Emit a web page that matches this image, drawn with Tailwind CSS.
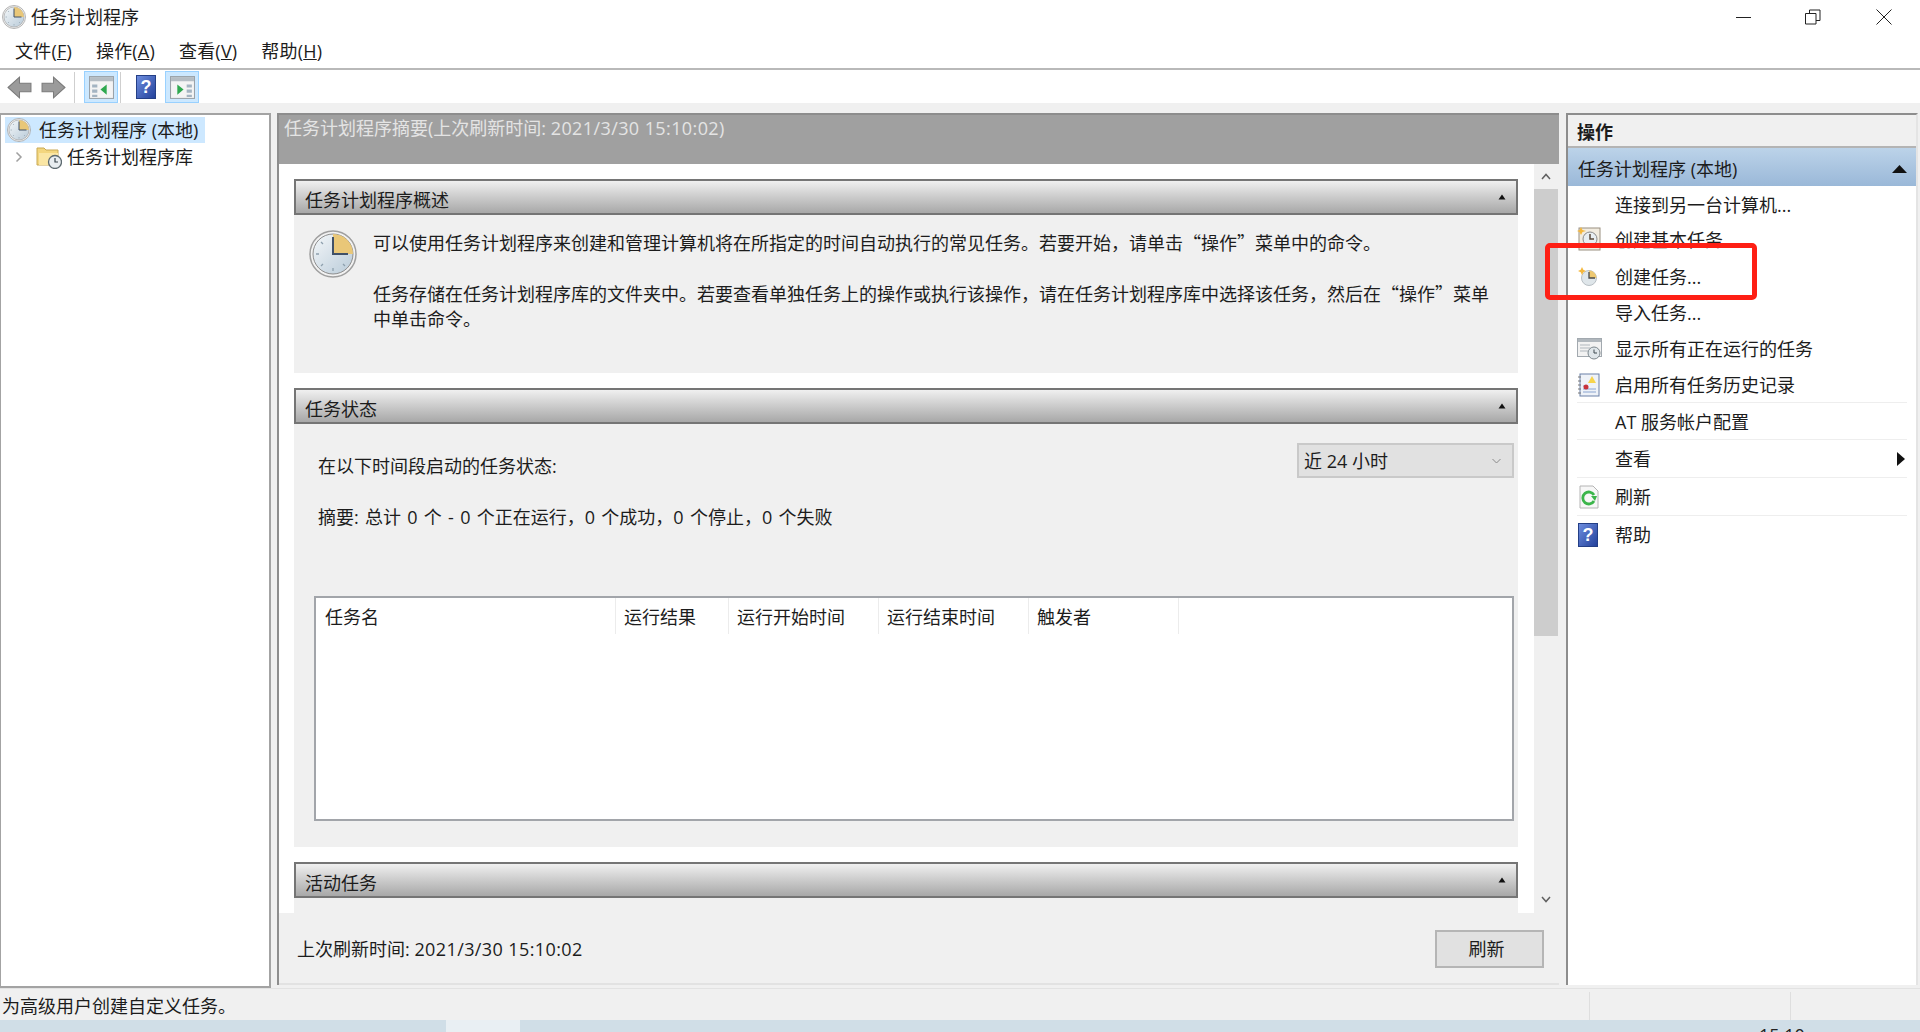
<!DOCTYPE html>
<html lang="zh-CN">
<head>
<meta charset="UTF-8">
<title>任务计划程序</title>
<script src="https://cdn.jsdelivr.net/npm/@tailwindcss/browser@4"></script>
</head>
<body class="bg-white text-[#1c1c1c] text-[18px] leading-[24px] font-['Open_Sans','Noto_Sans_CJK_SC',sans-serif]">
<!-- shared icons; not display:none or the gradients stop working -->
<svg class="absolute w-0 h-0">
  <defs>
    <linearGradient id="dial" x1="0" y1="0" x2="1" y2="1">
      <stop offset="0" stop-color="#f4f7f9"/>
      <stop offset="1" stop-color="#b9cbd9"/>
    </linearGradient>
    <linearGradient id="helpfill" x1="0" y1="0" x2="1" y2="1">
      <stop offset="0" stop-color="#6f8fe0"/>
      <stop offset="1" stop-color="#22409a"/>
    </linearGradient>
  </defs>
  <symbol id="clock" viewBox="0 0 48 48">
    <circle cx="24" cy="24" r="23" fill="#f2f2f2" stroke="#9f9f9f" stroke-width="1.5"/>
    <circle cx="24" cy="24" r="20" fill="url(#dial)" stroke="#8d8d8d"/>
    <path d="M24 24V4A20 20 0 0 1 44 24Z" fill="#e9c778"/>
    <path d="M24 41v-3M7 24h3M12 36l2-2M36 36l-2-2M12 12l2 2" stroke="#8ea0ae" stroke-width="1.300"/>
    <path d="M24 7v17h15" fill="none" stroke="#3f5068" stroke-width="2"/>
  </symbol>
  <symbol id="arrow" viewBox="0 0 24 24">
    <path d="M1 12 12 2v6h11v8H12v6Z" fill="#9b9b9b" stroke="#7b7b7b"/>
  </symbol>
  <symbol id="panel-left" viewBox="0 0 24 24">
    <rect x="0.5" y="1.5" width="23" height="21" fill="#f4f4f4" stroke="#9aa2a9"/>
    <rect x="1" y="2" width="22" height="4" fill="#b5bdc4"/>
    <path d="M3 9h5v3H3zM3 14h5v3H3zM3 19h5v2H3z" fill="#a4b4c2"/>
    <path d="M17 9v10l-6-5Z" fill="#2fa84f"/>
  </symbol>
  <symbol id="panel-right" viewBox="0 0 24 24">
    <rect x="0.5" y="1.5" width="23" height="21" fill="#f4f4f4" stroke="#9aa2a9"/>
    <rect x="1" y="2" width="22" height="4" fill="#b5bdc4"/>
    <path d="M16 9h5v3h-5zM16 14h5v3h-5zM16 19h5v2h-5z" fill="#a4b4c2"/>
    <path d="M7 9v10l6-5Z" fill="#2fa84f"/>
  </symbol>
  <symbol id="collapse" viewBox="0 0 8 6">
    <path d="M4 0.5 7.5 5.5H.5Z" fill="#111"/>
  </symbol>
</svg>

<div class="flex flex-col w-[1920px] h-[1032px] overflow-hidden">
  <!-- title bar -->
  <div class="h-[34px] flex items-center shrink-0">
    <svg class="w-[24px] h-[24px] ml-[2px]"><use href="#clock"/></svg>
    <span class="ml-[5px]">任务计划程序</span>
    <div class="ml-auto flex items-center">
      <svg class="w-[16px] h-[16px] mr-[53px]" viewBox="0 0 16 16"><path d="M0 8.5h15" stroke="#222" fill="none"/></svg>
      <svg class="w-[16px] h-[16px] mr-[55px]" viewBox="0 0 16 16"><path d="M.5 4.5h10.500v10.500H.5ZM4.500 4.500V1h10.500v10.500H11" stroke="#222" fill="none"/></svg>
      <svg class="w-[16px] h-[16px] mr-[28px]" viewBox="0 0 16 16"><path d="M.5.5l15 15M15.500.5l-15 15" stroke="#222" fill="none"/></svg>
    </div>
  </div>
  <!-- menu -->
  <div class="h-[36px] flex items-center pl-[15px] gap-[24px] tracking-[.2px] border-b-2 border-[#b9b9b9] shrink-0 pb-[1px]">
    <span>文件(<u>F</u>)</span>
    <span>操作(<u>A</u>)</span>
    <span>查看(<u>V</u>)</span>
    <span>帮助(<u>H</u>)</span>
  </div>
  <!-- toolbar -->
  <div class="h-[33px] pt-[1px] flex items-center shrink-0">
    <svg class="w-[25px] h-[25px] ml-[7px]"><use href="#arrow"/></svg>
    <svg class="w-[25px] h-[25px] ml-[9px] -scale-x-100"><use href="#arrow"/></svg>
    <div class="w-px h-[31px] bg-[#cfcfcf] ml-[8px]"></div>
    <div class="w-[34px] h-[32px] ml-[9px] flex items-center justify-center bg-[#cce8ff] border border-[#99d1ff]">
      <svg class="w-[25px] h-[25px]"><use href="#panel-left"/></svg>
    </div>
    <div class="w-px h-[31px] bg-[#cfcfcf] ml-[2px]"></div>
    <svg class="w-[20px] h-[24px] ml-[15px]" viewBox="0 0 20 24">
      <rect x="0.5" y="0.5" width="19" height="23" fill="url(#helpfill)" stroke="#243f86"/>
      <text x="10" y="18" text-anchor="middle" font-size="18" font-weight="700" fill="#fff" font-family="Liberation Sans">?</text>
    </svg>
    <div class="w-[34px] h-[32px] ml-[9px] flex items-center justify-center bg-[#cce8ff] border border-[#99d1ff]">
      <svg class="w-[25px] h-[25px]"><use href="#panel-right"/></svg>
    </div>
  </div>

  <div class="flex-1 bg-[#f0f0f0] pt-[10px] flex flex-col min-h-0">
    <div class="h-[875px] flex shrink-0">
      <!-- left tree -->
      <div class="w-[271px] h-[875px] bg-white border-2 border-[#a3a3a3] border-l-[1px] pt-[2px] pl-[4px] shrink-0">
        <div class="w-[200px] h-[26px] bg-[#cde8ff] flex items-center">
          <svg class="w-[24px] h-[24px] ml-[2px]"><use href="#clock"/></svg>
          <span class="ml-[8px]">任务计划程序 (本地)</span>
        </div>
        <div class="h-[26px] flex items-center mt-[1px]">
          <svg class="w-[8px] h-[12px] ml-[10px]" viewBox="0 0 8 12"><path d="M1.500 1.500 6 6l-4.500 4.500" fill="none" stroke="#a0a0a0" stroke-width="1.500"/></svg>
          <svg class="w-[26px] h-[24px] ml-[13px]" viewBox="0 0 26 24">
            <path d="M1 3h7l2 2h12v15H1Z" fill="#f3d67e" stroke="#c9a954"/>
            <path d="M3 8h19v12H3Z" fill="#fae6a4"/>
            <circle cx="19" cy="17" r="6.500" fill="#e8edf0" stroke="#5d6a70" stroke-width="1.300"/>
            <path d="M19 13v4h3" fill="none" stroke="#38454c" stroke-width="1.200"/>
          </svg>
          <span class="ml-[5px]">任务计划程序库</span>
        </div>
      </div>

      <!-- main pane -->
      <div class="w-[1282px] h-[872px] ml-[6px] border-l-2 border-t-2 border-[#8d8d8d] flex flex-col shrink-0">
        <div class="h-[49px] bg-[#a0a0a0] text-[#e4e4e4] pl-[5px] pt-[1px] shrink-0">任务计划程序摘要(上次刷新时间: <span class="tracking-[.4px]">2021/3/30 15:10:02</span>)</div>
        <div class="h-[749px] flex shrink-0">
          <div class="w-[1255px] bg-white pl-[15px] pr-[16px] pt-[15px] overflow-hidden shrink-0">
            <!-- overview -->
            <div class="h-[36px] flex items-center justify-between pl-[9px] pr-[10px] pt-[6px] border-2 border-[#757575] bg-linear-to-b from-[#f0f0f0] to-[#a8a8a8]">
              <span>任务计划程序概述</span>
              <svg class="w-[8px] h-[6px] mb-[6px]"><use href="#collapse"/></svg>
            </div>
            <div class="h-[158px] bg-[#f0f0f0] flex pt-[15px] leading-[25px]">
              <svg class="w-[48px] h-[48px] ml-[15px] shrink-0"><use href="#clock"/></svg>
              <div class="ml-[16px]">
                <p>可以使用任务计划程序来创建和管理计算机将在所指定的时间自动执行的常见任务。若要开始&#65292;请单击<span class="font-['Noto_Sans_CJK_SC']">“操作”</span>菜单中的命令。</p>
                <p class="mt-[25px]">任务存储在任务计划程序库的文件夹中。若要查看单独任务上的操作或执行该操作&#65292;请在任务计划程序库中选择该任务&#65292;然后在<span class="font-['Noto_Sans_CJK_SC']">“操作”</span>菜单<br>中单击命令。</p>
              </div>
            </div>
            <!-- status -->
            <div class="h-[36px] mt-[15px] flex items-center justify-between pl-[9px] pr-[10px] pt-[6px] border-2 border-[#757575] bg-linear-to-b from-[#f0f0f0] to-[#a8a8a8]">
              <span>任务状态</span>
              <svg class="w-[8px] h-[6px] mb-[6px]"><use href="#collapse"/></svg>
            </div>
            <div class="h-[423px] bg-[#f0f0f0] pt-[19px] pl-[24px] pr-[4px]">
              <div class="flex justify-between items-start h-[35px]">
                <span class="mt-[11px]">在以下时间段启动的任务状态:</span>
                <div class="w-[217px] h-[35px] bg-[#e1e1e1] border-2 border-[#c9c9c9] flex items-center justify-between pl-[5px] pr-[11px]">
                  <span>近 24 小时</span>
                  <svg class="w-[9px] h-[6px]" viewBox="0 0 9 6"><path d="M.5 1 4.500 5 8.500 1" fill="none" stroke="#8a8a8a"/></svg>
                </div>
              </div>
              <p class="mt-[27px] [word-spacing:1.6px]">摘要: 总计 0 个 - 0 个正在运行&#65292;0 个成功&#65292;0 个停止&#65292;0 个失败</p>
              <div class="w-[1200px] h-[225px] ml-[-4px] mt-[67px] bg-white border-2 border-[#a2a5aa]">
                <div class="flex h-[36px] items-center">
                  <div class="w-[300px] h-full pl-[9px] pt-[1px] flex items-center border-r border-[#ececec]">任务名</div>
                  <div class="w-[113px] h-full pl-[8px] pt-[1px] flex items-center border-r border-[#ececec]">运行结果</div>
                  <div class="w-[150px] h-full pl-[8px] pt-[1px] flex items-center border-r border-[#ececec]">运行开始时间</div>
                  <div class="w-[150px] h-full pl-[8px] pt-[1px] flex items-center border-r border-[#ececec]">运行结束时间</div>
                  <div class="w-[150px] h-full pl-[8px] pt-[1px] flex items-center border-r border-[#ececec]">触发者</div>
                </div>
              </div>
            </div>
            <!-- active -->
            <div class="h-[36px] mt-[15px] flex items-center justify-between pl-[9px] pr-[10px] pt-[6px] border-2 border-[#757575] bg-linear-to-b from-[#f0f0f0] to-[#a8a8a8]">
              <span>活动任务</span>
              <svg class="w-[8px] h-[6px] mb-[6px]"><use href="#collapse"/></svg>
            </div>
            <div class="h-[40px] bg-[#f0f0f0]"></div>
          </div>
          <!-- scrollbar -->
          <div class="w-[24px] bg-[#f0f0f0] flex flex-col shrink-0">
            <div class="h-[25px] flex items-center justify-center">
              <svg class="w-[10px] h-[7px]" viewBox="0 0 10 7"><path d="M1 6 5 1.500 9 6" fill="none" stroke="#606060" stroke-width="1.500"/></svg>
            </div>
            <div class="h-[447px] bg-[#cdcdcd]"></div>
            <div class="flex-1 flex items-end justify-center pb-[10px]">
              <svg class="w-[10px] h-[7px]" viewBox="0 0 10 7"><path d="M1 1 5 5.500 9 1" fill="none" stroke="#606060" stroke-width="1.500"/></svg>
            </div>
          </div>
        </div>
        <div class="flex-1 flex items-center justify-between pl-[18px] pr-[15px] pt-[1px] border-b-2 border-[#e2e2e2]">
          <span>上次刷新时间: <span class="tracking-[.4px]">2021/3/30 15:10:02</span></span>
          <div class="w-[109px] h-[38px] bg-[#e1e1e1] border-2 border-[#b5b5b5] pr-[6px] flex items-center justify-center">刷新</div>
        </div>
      </div>

      <!-- actions pane -->
      <div class="relative w-[352px] h-[872px] ml-[7px] bg-white border-l-2 border-t-2 border-[#8d8d8d] border-r-2 border-r-[#e4e4e4] shrink-0">
        <div class="h-[33px] bg-[#f0f0f0] border-b-2 border-[#b4b4b4] pl-[9px] pt-[2px] flex items-center font-bold">操作</div>
        <div class="h-[38px] bg-linear-to-b from-[#bcd3e9] to-[#9ab8d8] pl-[10px] pr-[9px] pt-[3px] flex items-center justify-between">
          <span>任务计划程序 (本地)</span>
          <svg class="w-[15px] h-[8px]" viewBox="0 0 15 8"><path d="M7.500 0 15 8H0Z" fill="#111"/></svg>
        </div>
        <div class="pl-[9px] pr-[9px] pt-[3px]">
          <div class="h-[32px] pl-[38px] flex items-center">连接到另一台计算机...</div>
          <div class="h-[36px] pt-[2px] flex items-center">
            <svg class="w-[24px] h-[24px] mb-[2px]" viewBox="0 0 24 24">
              <rect x="2" y="1" width="21" height="22" fill="#f2ece0" stroke="#9a9080"/>
              <circle cx="13" cy="12" r="7" fill="#e8eef2" stroke="#8a8a8a"/>
              <path d="M13 7v5h4" fill="none" stroke="#5a4a3a" stroke-width="1.500"/>
              <path d="M4 0 5.500 3 9 4 5.500 5 4 8 2.500 5 0 4l2.500-1Z" fill="#f5b83d"/>
            </svg>
            <span class="ml-[14px]">创建基本任务...</span>
          </div>
          <div class="h-[38px] pt-[2px] flex items-center">
            <svg class="w-[24px] h-[24px]" viewBox="0 0 24 24">
              <circle cx="12" cy="13" r="7.500" fill="#dfe6ea" stroke="#b8bfc4"/>
              <path d="M12 13V5.500A7.500 7.500 0 0 1 19.500 13Z" fill="#edc872"/>
              <path d="M12 7v6h6" fill="none" stroke="#4a4a4a" stroke-width="1.300"/>
              <path d="M5 2 6.300 4.700 9 6 6.300 7.300 5 10 3.700 7.300 1 6 3.700 4.700Z" fill="#f5b83d"/>
            </svg>
            <span class="ml-[14px]">创建任务...</span>
          </div>
          <div class="h-[36px] pl-[38px] flex items-center">导入任务...</div>
          <div class="h-[36px] flex items-center">
            <svg class="w-[25px] h-[22px]" viewBox="0 0 25 22">
              <rect x="0.500" y="0.500" width="24" height="18" fill="#f2f2f2" stroke="#a2a9af"/>
              <rect x="1" y="1" width="23" height="3" fill="#b0b7bd"/>
              <path d="M3 7h10M3 10h10M3 13h8" stroke="#b0b7bd"/>
              <circle cx="17" cy="15" r="6" fill="#dfe6ea" stroke="#7d878d"/>
              <path d="M17 11.500V15h3" fill="none" stroke="#3f4a50"/>
            </svg>
            <span class="ml-[13px]">显示所有正在运行的任务</span>
          </div>
          <div class="h-[36px] flex items-center border-b border-[#eeeeee]">
            <svg class="w-[24px] h-[24px]" viewBox="0 0 24 24">
              <rect x="3" y="1" width="19" height="22" fill="#eef2f8" stroke="#6a80a8"/>
              <path d="M6 16h13M6 19h13M6 13h4" stroke="#8aa4d0"/>
              <path d="M15 3l4 7h-8Z" fill="#f7d44c"/>
              <circle cx="9" cy="14" r="2.500" fill="#c8323a"/>
              <path d="M1 4h3M1 8h3M1 12h3M1 16h3M1 20h3" stroke="#777"/>
            </svg>
            <span class="ml-[14px]">启用所有任务历史记录</span>
          </div>
          <div class="h-[37px] pl-[38px] pt-[2px] flex items-center border-b border-[#eeeeee]">AT 服务帐户配置</div>
          <div class="h-[38px] pl-[38px] pr-[2px] flex items-center justify-between border-b border-[#eeeeee]">
            <span>查看</span>
            <svg class="w-[8px] h-[14px]" viewBox="0 0 8 14"><path d="M0 0 8 7 0 14Z" fill="#111"/></svg>
          </div>
          <div class="h-[38px] flex items-center border-b border-[#eeeeee]">
            <svg class="w-[24px] h-[24px]" viewBox="0 0 24 24">
              <path d="M3 1h13l5 5v17H3Z" fill="#f7f7f7" stroke="#b4b4b4"/>
              <path d="M17 10a6 6 0 1 0 0 6" fill="none" stroke="#3bb54a" stroke-width="2.800"/>
              <path d="M14 11h6l-2 5Z" fill="#3bb54a"/>
            </svg>
            <span class="ml-[14px]">刷新</span>
          </div>
          <div class="h-[37px] flex items-center">
            <svg class="w-[20px] h-[24px] ml-[1px]" viewBox="0 0 20 24">
              <rect x="0.5" y="0.5" width="19" height="23" fill="url(#helpfill)" stroke="#243f86"/>
              <text x="10" y="18" text-anchor="middle" font-size="18" font-weight="700" fill="#fff" font-family="Liberation Sans">?</text>
            </svg>
            <span class="ml-[17px]">帮助</span>
          </div>
        </div>
        <!-- red annotation box -->
        <div class="absolute left-[-23px] top-[128px] w-[212px] h-[57px] border-[5px] border-[#fe1f14] rounded-[5px]"></div>
      </div>
    </div>
    <!-- status bar -->
    <div class="h-[32px] flex items-center pl-[2px] pt-[2px] shrink-0 border-t border-[#e2e2e2]">
      <span class="w-[1587px] shrink-0">为高级用户创建自定义任务。</span>
      <div class="w-px h-[28px] bg-[#dedede]"></div>
      <div class="w-[200px]"></div>
      <div class="w-px h-[28px] bg-[#dedede]"></div>
    </div>
    <!-- strip of the desktop below the window -->
    <div class="h-[12px] flex bg-[#d0dee7] overflow-hidden shrink-0">
      <div class="w-[74px] ml-[446px] bg-[#e9eff3]"></div>
      <span class="ml-[1239px] mt-[3px] text-[#222]">15:10</span>
    </div>
  </div>
</div>
</body>
</html>
